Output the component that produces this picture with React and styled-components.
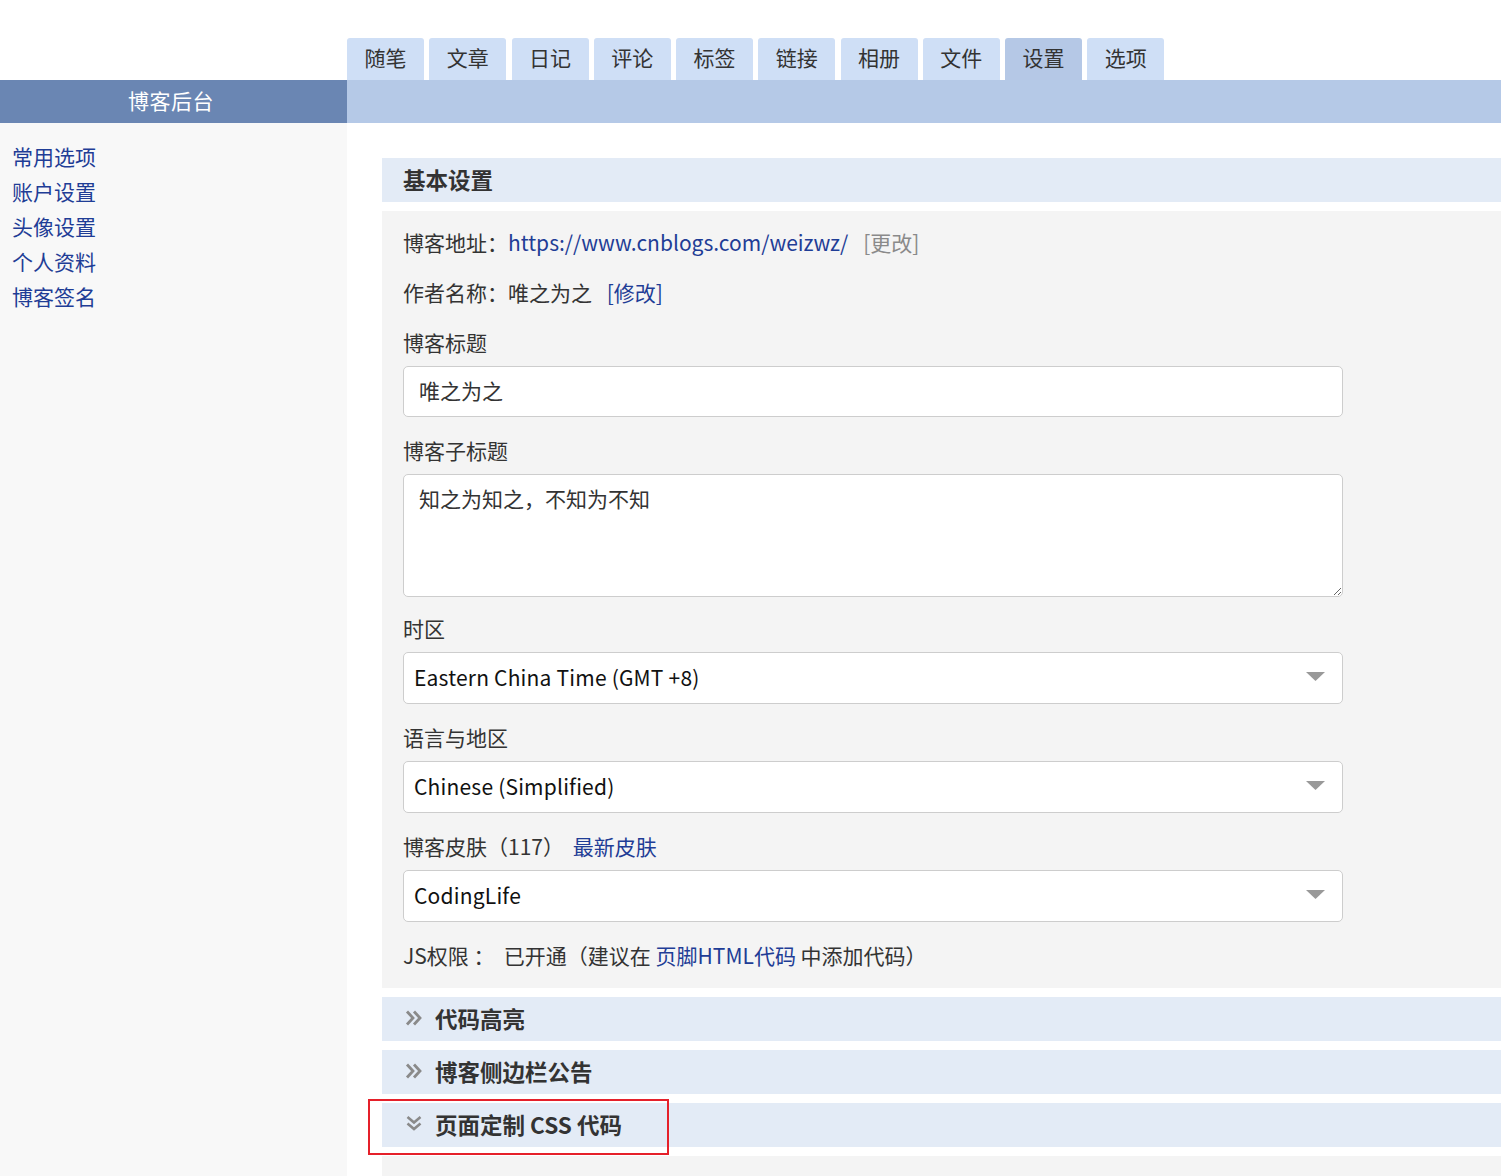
import React from "react";
import styled, { createGlobalStyle } from "styled-components";

const Global = createGlobalStyle`
  html, body { margin: 0; padding: 0; background: #fff; }
  body {
    font-family: "Noto Sans CJK SC", "Noto Sans", sans-serif;
    color: #333;
    overflow: hidden;
  }
`;

const Page = styled.div`
  width: 1501px;
  height: 1176px;
  display: flex;
  flex-direction: column;
  overflow: hidden;
`;

const TabRow = styled.div`
  height: 80px;
  padding-left: 347px;
  display: flex;
  align-items: flex-end;
  gap: 5.25px;
  box-sizing: border-box;
`;

const Tab = styled.div`
  width: 77px;
  height: 42px;
  padding-bottom: 5px;
  box-sizing: border-box;
  border-radius: 3px 3px 0 0;
  background: ${(p) => (p.$active ? "#b5c8e6" : "#cfdff6")};
  display: flex;
  align-items: center;
  justify-content: center;
  font-size: 21px;
  color: #333;
`;

const HeaderBar = styled.div`
  height: 43px;
  display: flex;
  background: #b5c9e7;
`;

const BrandTitle = styled.div`
  width: 347px;
  box-sizing: border-box;
  padding: 0 5px 4px 0;
  background: #6a86b3;
  color: #fff;
  font-size: 21px;
  letter-spacing: 0.5px;
  display: flex;
  align-items: center;
  justify-content: center;
`;

const Body = styled.div`
  flex: 1;
  display: flex;
  min-height: 0;
`;

const Sidebar = styled.nav`
  width: 347px;
  background: #f8f8f8;
  padding: 16px 0 0 12px;
  box-sizing: border-box;
  display: flex;
  flex-direction: column;
`;

const SideLink = styled.a`
  font-size: 21px;
  line-height: 35px;
  color: #1f3d96;
  text-decoration: none;
`;

const Main = styled.main`
  flex: 1;
  padding: 35px 0 0 35px;
  display: flex;
  flex-direction: column;
  gap: 9px;
  min-width: 0;
`;

const SectionHeader = styled.div`
  position: relative;
  height: 44px;
  box-sizing: border-box;
  padding-bottom: 2px;
  background: #e3ebf6;
  display: flex;
  align-items: center;
  gap: 12px;
  padding-left: ${(p) => (p.$icon ? "23px" : "21px")};
  font-size: 22.5px;
  font-weight: 700;
  color: #333;
  flex-shrink: 0;
`;

const Chevron = styled.svg`
  width: 18px;
  height: 18px;
  flex-shrink: 0;
`;

const Highlight = styled.div`
  position: absolute;
  left: -14px;
  top: -4px;
  width: 301px;
  height: 56px;
  border: 2px solid #e5202a;
  box-sizing: border-box;
  pointer-events: none;
`;

const Content = styled.div`
  background: #f4f4f4;
  padding: 6px 21px 18px;
  flex-shrink: 0;
`;

const InfoRow = styled.div`
  font-size: 21px;
  line-height: 50px;
  color: #333;
`;

const Link = styled.a`
  color: ${(p) => (p.$muted ? "#8a8a8a" : "#1f3d96")};
  text-decoration: none;
  margin-left: ${(p) => p.$ml || 0}px;
`;

const Field = styled.div`
  margin-top: ${(p) => p.$gap ?? 18}px;
  display: flex;
  flex-direction: column;
`;

const Label = styled.div`
  font-size: 21px;
  line-height: 30px;
  margin-bottom: 9px;
  color: #333;
`;

const TextInput = styled.input`
  width: 940px;
  height: 51px;
  box-sizing: border-box;
  border: 1px solid #cdcdcd;
  border-radius: 5px;
  background: #fff;
  padding: 0 15px 3px;
  font-family: inherit;
  font-size: 21px;
  color: #333;
  outline: none;
`;

const TextArea = styled.textarea`
  width: 940px;
  height: 123px;
  box-sizing: border-box;
  border: 1px solid #cdcdcd;
  border-radius: 5px;
  background: #fff;
  padding: 8px 15px;
  font-family: inherit;
  font-size: 21px;
  line-height: 30px;
  color: #333;
  outline: none;
  resize: vertical;
  display: block;
`;

const Select = styled.div`
  width: 940px;
  height: 52px;
  box-sizing: border-box;
  border: 1px solid #cdcdcd;
  border-radius: 5px;
  background: #fff;
  padding: 0 17px 2px 10px;
  display: flex;
  align-items: center;
  justify-content: space-between;
  font-size: 21px;
  letter-spacing: 0.2px;
  color: #111;
`;

const Caret = styled.svg`
  width: 19px;
  height: 10px;
`;

const JsRow = styled.div`
  margin-top: 18px;
  font-size: 21px;
  line-height: 30px;
  color: #333;
`;

const Rest = styled.div`
  background: #f4f4f4;
  flex: 1;
`;

const tabs = ["随笔", "文章", "日记", "评论", "标签", "链接", "相册", "文件", "设置", "选项"];
const links = ["常用选项", "账户设置", "头像设置", "个人资料", "博客签名"];

const DoubleRight = () => (
  <Chevron viewBox="0 0 18 18">
    <polyline points="2,2.5 8,9 2,15.5" fill="none" stroke="#8a8a8a" strokeWidth="2.8" />
    <polyline points="9,2.5 15,9 9,15.5" fill="none" stroke="#8a8a8a" strokeWidth="2.8" />
  </Chevron>
);

const DoubleDown = () => (
  <Chevron viewBox="0 0 18 18">
    <polyline points="2.5,2 9,7.5 15.5,2" fill="none" stroke="#8a8a8a" strokeWidth="2.6" />
    <polyline points="2.5,8.5 9,14 15.5,8.5" fill="none" stroke="#8a8a8a" strokeWidth="2.6" />
  </Chevron>
);

const SelectBox = ({ value }) => (
  <Select>
    <span>{value}</span>
    <Caret viewBox="0 0 19 10">
      <polygon points="0,0 19,0 9.5,9" fill="#999" />
    </Caret>
  </Select>
);

export default function App() {
  return (
    <Page>
      <Global />
      <TabRow>
        {tabs.map((t) => (
          <Tab key={t} $active={t === "设置"}>{t}</Tab>
        ))}
      </TabRow>
      <HeaderBar>
        <BrandTitle>博客后台</BrandTitle>
      </HeaderBar>
      <Body>
        <Sidebar>
          {links.map((l) => (
            <SideLink key={l} href="#">{l}</SideLink>
          ))}
        </Sidebar>
        <Main>
          <SectionHeader>基本设置</SectionHeader>
          <Content>
            <InfoRow>
              博客地址：<Link href="#">https://www.cnblogs.com/weizwz/</Link>
              <Link href="#" $muted $ml={15}>[更改]</Link>
            </InfoRow>
            <InfoRow>
              作者名称：唯之为之 <Link href="#" $ml={10}>[修改]</Link>
            </InfoRow>
            <Field $gap={10}>
              <Label>博客标题</Label>
              <TextInput defaultValue="唯之为之" />
            </Field>
            <Field>
              <Label>博客子标题</Label>
              <TextArea defaultValue="知之为知之，不知为不知" />
            </Field>
            <Field $gap={16}>
              <Label>时区</Label>
              <SelectBox value="Eastern China Time (GMT +8)" />
            </Field>
            <Field>
              <Label>语言与地区</Label>
              <SelectBox value="Chinese (Simplified)" />
            </Field>
            <Field>
              <Label>
                博客皮肤（117） <Link href="#" $ml={4}>最新皮肤</Link>
              </Label>
              <SelectBox value="CodingLife" />
            </Field>
            <JsRow>
              JS权限 ：&nbsp;&nbsp;已开通（建议在 <Link href="#">页脚HTML代码</Link> 中添加代码）
            </JsRow>
          </Content>
          <SectionHeader $icon>
            <DoubleRight />
            代码高亮
          </SectionHeader>
          <SectionHeader $icon>
            <DoubleRight />
            博客侧边栏公告
          </SectionHeader>
          <SectionHeader $icon>
            <DoubleDown />
            页面定制 CSS 代码
            <Highlight />
          </SectionHeader>
          <Rest />
        </Main>
      </Body>
    </Page>
  );
}
